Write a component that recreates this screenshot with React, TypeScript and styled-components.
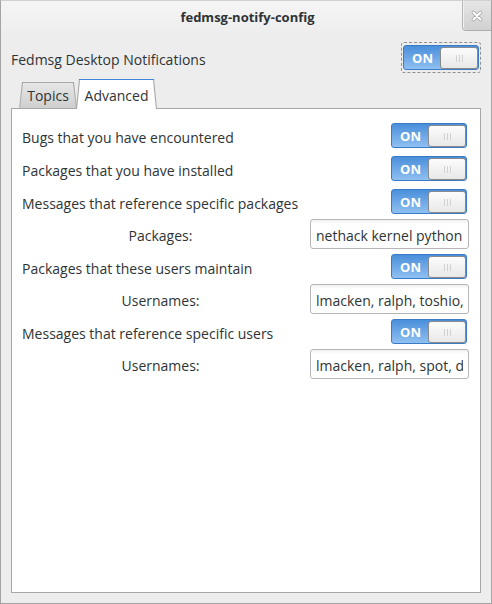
import React from 'react';
import styled, { createGlobalStyle } from 'styled-components';

const GlobalStyle = createGlobalStyle`
  html, body { margin: 0; padding: 0; background: #ededed; }
  * { box-sizing: border-box; }
`;

const Window = styled.div`
  width: 492px;
  height: 604px;
  display: flex;
  flex-direction: column;
  background: #ededed;
  border: 1px solid #a4a4a4;
  border-top-color: #d0d0d0;
  color: #2e3436;
  font-family: 'Open Sans', 'Noto Sans', sans-serif;
  font-size: 14px;
  overflow: hidden;
`;

const TitleBar = styled.div`
  flex: none;
  height: 35px;
  display: grid;
  grid-template-columns: 29px 1fr 29px;
  align-items: start;
  background: linear-gradient(#f5f5f5, #ededed);
`;

const Title = styled.div`
  grid-column: 2;
  text-align: center;
  font-weight: 700;
  font-size: 13px;
  line-height: 16px;
  padding-top: 8px;
  padding-left: 3px;
  color: #2e3436;
`;

const CloseButton = styled.button`
  grid-column: 3;
  width: 29px;
  height: 30px;
  margin: 0;
  padding: 0;
  border: none;
  border-left: 1px solid #b4b4b4;
  border-bottom: 1px solid #adadad;
  border-bottom-left-radius: 4px;
  background: linear-gradient(#e6e6e6, #d0d0d0);
  box-shadow: inset 1px 0 0 #f2f2f2;
  display: flex;
  align-items: center;
  justify-content: center;
`;

const Header = styled.div`
  flex: none;
  display: flex;
  align-items: center;
  justify-content: space-between;
  padding: 6px 10px 0 10px;
`;

const Notebook = styled.div`
  flex: 1;
  display: flex;
  flex-direction: column;
  margin: 6px 10px 10px 10px;
`;

const TabStrip = styled.div`
  flex: none;
  height: 30px;
  display: flex;
  align-items: flex-end;
  padding-left: 8px;
  margin-bottom: -1px;
  position: relative;
  z-index: 1;
`;

const Tab = styled.div<{ $active?: boolean }>`
  position: relative;
  height: ${(p) => (p.$active ? 30 : 27)}px;
  width: ${(p) => (p.$active ? 81 : 58)}px;
  margin-left: ${(p) => (p.$active ? -1 : 0)}px;
  display: flex;
  justify-content: center;
  padding-top: ${(p) => (p.$active ? 7 : 4)}px;
  line-height: 19px;
  &::before {
    content: '';
    position: absolute;
    inset: 0;
    clip-path: polygon(3px 0, calc(100% - 3px) 0, 100% 100%, 0 100%);
    background: ${(p) =>
      p.$active
        ? 'linear-gradient(#3f86d4 0, #3f86d4 1px, #8fb9e6 1px, #8fb9e6 2px, #a4a4a4 2px)'
        : '#a8a8a8'};
  }
  &::after {
    content: '';
    position: absolute;
    inset: ${(p) => (p.$active ? '1px 1px 0 1px' : '1px 1px 1px 1px')};
    clip-path: polygon(3px 0, calc(100% - 3px) 0, 100% 100%, 0 100%);
    background: ${(p) => (p.$active ? '#ffffff' : 'linear-gradient(#e6e6e6, #cfcfcf)')};
  }
`;

const TabLabel = styled.span`
  position: relative;
  z-index: 1;
`;

const Page = styled.div`
  flex: 1;
  background: #ffffff;
  border: 1px solid #a6a6a6;
  padding: 11px 11px 0 10px;
  display: flex;
  flex-direction: column;
  gap: 2px;
`;

const Row = styled.div`
  display: flex;
  align-items: center;
  justify-content: space-between;
`;

const RowLabel = styled.span`
  white-space: nowrap;
  padding-top: 3px;
`;

const SubRow = styled.div`
  display: flex;
  align-items: center;
`;

const SubLabel = styled.span`
  flex: 1;
  text-align: center;
  padding-top: 3px;
`;

const Entry = styled.input`
  flex: none;
  width: 159px;
  height: 30px;
  margin: 0 0 0 11px;
  padding: 2px 5px 0 5px;
  border: 1px solid #b6b6b6;
  border-radius: 3px;
  background: linear-gradient(#f0f0f0 0, #ffffff 4px);
  font: inherit;
  color: #2e3436;
  outline: none;
`;

const SwitchRing = styled.div<{ $focused?: boolean }>`
  flex: none;
  padding: 2px 1px;
  border: 1px dashed ${(p) => (p.$focused ? '#8f8f8f' : 'transparent')};
  border-radius: 3px;
`;

const SwitchTrack = styled.div`
  width: 76px;
  height: 25px;
  display: flex;
  border: 1px solid #3b7bc6;
  border-radius: 3px;
  background: linear-gradient(#4a8fdb, #8fc0f1);
`;

const SwitchOn = styled.span`
  flex: 1;
  display: flex;
  align-items: center;
  justify-content: center;
  color: #ffffff;
  font-weight: 700;
  font-size: 13px;
  padding: 1px 0 0 1px;
`;

const Knob = styled.span`
  flex: none;
  width: 38px;
  margin-top: 1px;
  border: 1px solid #8a8a8a;
  border-radius: 3px;
  background: linear-gradient(#fcfcfc, #e8e8e8);
  display: flex;
  align-items: center;
  justify-content: center;
  gap: 2px;
`;

const Grip = styled.span`
  width: 1px;
  height: 7px;
  background: #d2d2d2;
`;

const Switch: React.FC<{ focused?: boolean }> = ({ focused }) => (
  <SwitchRing $focused={focused}>
    <SwitchTrack>
      <SwitchOn>ON</SwitchOn>
      <Knob>
        <Grip />
        <Grip />
        <Grip />
      </Knob>
    </SwitchTrack>
  </SwitchRing>
);

export default function App() {
  return (
    <>
      <GlobalStyle />
      <Window>
        <TitleBar>
          <Title>fedmsg-notify-config</Title>
          <CloseButton aria-label="Close">
            <svg width="12" height="12" viewBox="0 0 12 12">
              <path d="M2.5 2.5 L9.5 9.5 M9.5 2.5 L2.5 9.5" stroke="#a8a8a8" strokeWidth="3.6" strokeLinecap="round" />
              <path d="M2.5 2.5 L9.5 9.5 M9.5 2.5 L2.5 9.5" stroke="#ffffff" strokeWidth="2" strokeLinecap="round" />
            </svg>
          </CloseButton>
        </TitleBar>
        <Header>
          <RowLabel>Fedmsg Desktop Notifications</RowLabel>
          <Switch focused />
        </Header>
        <Notebook>
          <TabStrip>
            <Tab>
              <TabLabel>Topics</TabLabel>
            </Tab>
            <Tab $active>
              <TabLabel>Advanced</TabLabel>
            </Tab>
          </TabStrip>
          <Page>
            <Row>
              <RowLabel>Bugs that you have encountered</RowLabel>
              <Switch />
            </Row>
            <Row>
              <RowLabel>Packages that you have installed</RowLabel>
              <Switch />
            </Row>
            <Row>
              <RowLabel>Messages that reference specific packages</RowLabel>
              <Switch />
            </Row>
            <SubRow>
              <SubLabel>Packages:</SubLabel>
              <Entry readOnly value="nethack kernel python" />
            </SubRow>
            <Row>
              <RowLabel>Packages that these users maintain</RowLabel>
              <Switch />
            </Row>
            <SubRow>
              <SubLabel>Usernames:</SubLabel>
              <Entry readOnly value="lmacken, ralph, toshio, pingou" />
            </SubRow>
            <Row>
              <RowLabel>Messages that reference specific users</RowLabel>
              <Switch />
            </Row>
            <SubRow>
              <SubLabel>Usernames:</SubLabel>
              <Entry readOnly value="lmacken, ralph, spot, dustymabe" />
            </SubRow>
          </Page>
        </Notebook>
      </Window>
    </>
  );
}
